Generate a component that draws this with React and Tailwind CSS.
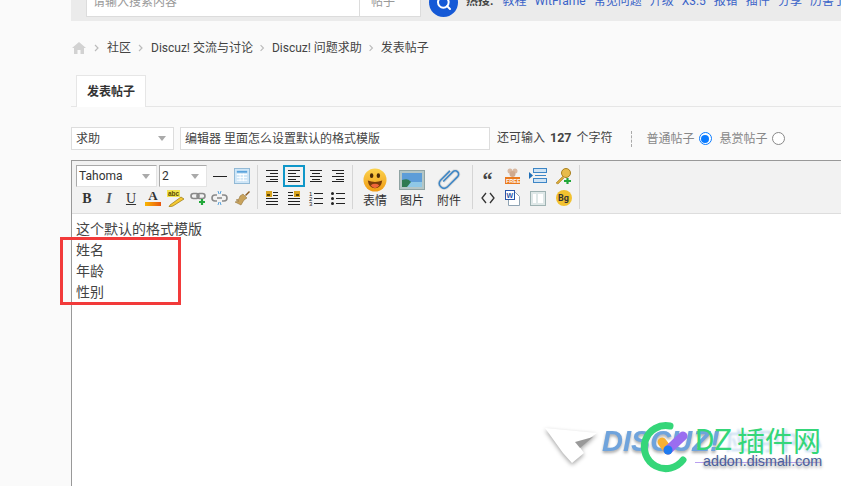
import { Search } from 'lucide-react'

const hotLinks = ['教程', 'WitFrame', '常见问题', '升级', 'X3.5', '报错', '插件', '分享', '历害了']
const crumbs = ['社区', 'Discuz! 交流与讨论', 'Discuz! 问题求助', '发表帖子']

function TopBar() {
  return (
    <div className="h-[21px] overflow-hidden bg-[#ebebeb] flex items-end pl-[15px]">
      <div className="shrink-0 flex items-center w-[335px] h-[30px] mb-[4px] bg-white border border-[#dcdcdc] text-[12px] text-[#999]">
        <span className="flex-1 pl-[6px]">请输入搜索内容</span>
        <span className="w-[61px] h-full border-l border-[#dcdcdc] pl-[11px] leading-[28px]">帖子</span>
      </div>
      <div className="shrink-0 w-[29px] h-[29px] mb-[4px] ml-[8px] rounded-full bg-[#1559d6] flex items-center justify-center">
        <Search className="w-[16px] h-[16px] text-white" strokeWidth={3} />
      </div>
      <div className="shrink-0 flex items-center gap-[8px] ml-[8px] h-[24px] mb-[8px] text-[12px] whitespace-nowrap">
        <span className="font-bold text-[#444] mr-[1px]">热搜:</span>
        {hotLinks.map((t) => (
          <span key={t} className="text-[#3a63c8]">{t}</span>
        ))}
      </div>
    </div>
  )
}

function Breadcrumb() {
  return (
    <div className="flex items-center h-[18px] mt-[18px] pl-[1px] text-[12px] text-[#444]">
      <svg width="14" height="12" viewBox="0 0 14 12" className="shrink-0">
        <path d="M7 0L0 6h2v6h3.500V8h3v4H12V6h2z" fill="#d2d2d2" />
      </svg>
      {crumbs.map((c, i) => (
        <span key={c} className="flex items-center">
          <svg width={i >= 2 ? 19 : 20} height="10" viewBox="0 0 20 10" className={i === 0 ? 'ml-[1px]' : ''}>
            <path d="M8 2l3 3-3 3" fill="none" stroke="#bbb" strokeWidth="1.2" />
          </svg>
          <span className="whitespace-nowrap">{c}</span>
        </span>
      ))}
    </div>
  )
}

function Select({ label, className }) {
  return (
    <div className={`flex items-center justify-between bg-white border ${className}`}>
      <span>{label}</span>
      <span className="w-0 h-0 border-x-[4px] border-x-transparent border-t-[5px] border-t-[#aaa]" />
    </div>
  )
}

function Radio({ checked }) {
  return (
    <span className={`block w-[13px] h-[13px] rounded-full bg-white flex items-center justify-center border ${checked ? 'border-[#0a7bff]' : 'border-[#888]'}`}>
      {checked && <span className="w-[8px] h-[8px] rounded-full bg-[#0a7bff]" />}
    </span>
  )
}

function AlignIcon({ widths, pic }) {
  return (
    <svg width="16" height="16" viewBox="0 0 16 16">
      {widths.map(([x1, x2, y]) => (
        <line key={y} x1={x1} x2={x2} y1={y + 0.5} y2={y + 0.5} stroke="#222" strokeWidth="1" />
      ))}
      {pic === 'left' && <rect x="2" y="1" width="6" height="6" fill="#d9a520" />}
      {pic === 'left' && <rect x="3" y="4" width="3" height="2" fill="#5a4308" />}
      {pic === 'right' && <rect x="8" y="1" width="6" height="6" fill="#d9a520" />}
      {pic === 'right' && <rect x="10" y="4" width="3" height="2" fill="#5a4308" />}
    </svg>
  )
}

const alignLeft = [[2, 14, 2], [2, 10, 5], [2, 14, 8], [2, 10, 11], [2, 14, 13]]
const alignCenter = [[2, 14, 2], [4, 12, 5], [2, 14, 8], [4, 12, 11], [2, 14, 13]]
const alignRight = [[2, 14, 2], [6, 14, 5], [2, 14, 8], [6, 14, 11], [2, 14, 13]]
const picLeft = [[9, 14, 2], [9, 14, 5], [2, 14, 8], [2, 14, 11], [2, 14, 14]]
const picRight = [[2, 7, 2], [2, 7, 5], [2, 14, 8], [2, 14, 11], [2, 14, 14]]

function Sep() {
  return <div className="w-px h-[44px] bg-[#d5d5d5] shrink-0" />
}

function IconCell({ className = '', children }) {
  return <div className={`flex items-center justify-center h-[22px] ${className}`}>{children}</div>
}

function FormatGroup() {
  return (
    <div className="w-[185px] shrink-0 pl-[4px]">
      <div className="flex items-center h-[22px]">
        <Select label="Tahoma" className="w-[81px] h-[22px] pl-[2px] pr-[6px] text-[12px] text-[#333] border-[#aaa] border-r-[#e4e4e4] border-b-[#e4e4e4]" />
        <Select label="2" className="w-[48px] h-[22px] ml-[2px] pl-[2px] pr-[7px] text-[12px] text-[#333] border-[#aaa] border-r-[#e4e4e4] border-b-[#e4e4e4]" />
        <div className="w-[14px] h-px bg-[#222] ml-[6px]" />
        <svg width="16" height="16" viewBox="0 0 17 17" className="ml-[7px]">
          <rect x="0.5" y="0.5" width="16" height="16" fill="#cfe6f7" stroke="#8fb7d4" />
          <rect x="3" y="3" width="11" height="2" fill="#5aa3dc" />
          <path d="M3 7h11M3 10h11M3 13h11M6.500 6v8M10 6v8" stroke="#fff" strokeWidth="1" />
        </svg>
      </div>
      <div className="flex items-center h-[22px] text-[#333]">
        <IconCell className="w-[22px] font-bold font-['Liberation_Serif',serif] text-[14px]">B</IconCell>
        <IconCell className="w-[22px] italic font-['Liberation_Serif',serif] text-[14px] font-bold text-[#555]">I</IconCell>
        <IconCell className="w-[22px] underline font-['Liberation_Serif',serif] text-[14px]">U</IconCell>
        <IconCell className="w-[22px] flex-col">
          <span className="font-['Liberation_Serif',serif] font-bold text-[13px] leading-[12px]">A</span>
          <span className="w-[16px] h-[4px] bg-gradient-to-r from-[#f7b500] to-[#e8540f]" />
        </IconCell>
        <IconCell className="w-[24px]">
          <svg width="18" height="17" viewBox="0 0 18 17">
            <rect x="0" y="0" width="13" height="7" fill="#f0e24a" />
            <text x="1" y="6" fontSize="6.500" fontWeight="bold" fill="#5a4a00" fontFamily="Liberation Sans">abc</text>
            <path d="M3 15l11-8 3 2-11 7-4 1z" fill="#f5c933" stroke="#97760f" strokeWidth="0.7" />
          </svg>
        </IconCell>
        <IconCell className="w-[20px]">
          <svg width="17" height="16" viewBox="0 0 17 16">
            <rect x="1" y="3.500" width="8" height="5" rx="2.500" fill="none" stroke="#8a8a8a" strokeWidth="1.6" />
            <rect x="7" y="3.500" width="8" height="5" rx="2.500" fill="none" stroke="#8a8a8a" strokeWidth="1.6" />
            <path d="M9 12h6M12 9v6" stroke="#22a83a" strokeWidth="2.200" />
          </svg>
        </IconCell>
        <IconCell className="w-[22px]">
          <svg width="17" height="16" viewBox="0 0 17 16">
            <path d="M6 5H4a3 3 0 000 6h2M11 5h2a3 3 0 010 6h-2M6 8h5" fill="none" stroke="#8a8a8a" strokeWidth="1.600" />
            <path d="M7 1l1 3M10 1L9 4M7 15l1-3M10 15l-1-3" stroke="#5aa3dc" strokeWidth="1" />
          </svg>
        </IconCell>
        <IconCell className="w-[24px]">
          <svg width="17" height="16" viewBox="0 0 17 16">
            <path d="M11 5l4-4 1 1-4 4z" fill="#8a5a20" />
            <path d="M9 4l4 4-3 2-3 5-6-3 4-1-3-1 3-1 1-3z" fill="#c9a35c" stroke="#8a6a30" strokeWidth="0.5" />
          </svg>
        </IconCell>
      </div>
    </div>
  )
}

function AlignGroup() {
  return (
    <div className="w-[94px] shrink-0 pl-[3px]">
      <div className="flex items-center h-[22px]">
        <IconCell className="w-[22px]"><AlignIcon widths={alignRight} /></IconCell>
        <IconCell className="w-[22px] border-2 border-[#0f97c9]"><AlignIcon widths={alignLeft} /></IconCell>
        <IconCell className="w-[22px]"><AlignIcon widths={alignCenter} /></IconCell>
        <IconCell className="w-[22px]"><AlignIcon widths={alignRight} /></IconCell>
      </div>
      <div className="flex items-center h-[22px]">
        <IconCell className="w-[22px]"><AlignIcon widths={picLeft} pic="left" /></IconCell>
        <IconCell className="w-[22px]"><AlignIcon widths={picRight} pic="right" /></IconCell>
        <IconCell className="w-[22px]">
          <svg width="16" height="16" viewBox="0 0 16 16">
            <text x="1" y="5.500" fontSize="6" fill="#222" fontFamily="Liberation Sans">1</text>
            <text x="1" y="10.500" fontSize="6" fill="#222" fontFamily="Liberation Sans">2</text>
            <text x="1" y="15.500" fontSize="6" fill="#222" fontFamily="Liberation Sans">3</text>
            <path d="M6 3.500h9M6 8.500h9M6 13.500h9" stroke="#222" />
          </svg>
        </IconCell>
        <IconCell className="w-[22px]">
          <svg width="16" height="16" viewBox="0 0 16 16">
            <circle cx="2.500" cy="3.500" r="1.500" fill="#222" />
            <circle cx="2.500" cy="8.500" r="1.500" fill="#222" />
            <circle cx="2.500" cy="13.500" r="1.500" fill="#222" />
            <path d="M6 3.500h9M6 8.500h9M6 13.500h9" stroke="#222" />
          </svg>
        </IconCell>
      </div>
    </div>
  )
}

function MediaGroup() {
  return (
    <div className="w-[119px] shrink-0 pl-[10px] pt-[3px] flex gap-[13px] text-[12px] text-[#333]">
      <div className="flex flex-col items-center w-[24px]">
        <svg width="24" height="24" viewBox="0 0 25 25">
          <defs>
            <linearGradient id="smile" x1="0" x2="0" y1="0" y2="1">
              <stop offset="0" stopColor="#fbd34f" />
              <stop offset="1" stopColor="#f09a12" />
            </linearGradient>
          </defs>
          <circle cx="12.500" cy="12.500" r="12" fill="url(#smile)" />
          <ellipse cx="9" cy="8" rx="1.800" ry="2.500" fill="#4a2a08" />
          <ellipse cx="16" cy="8" rx="1.800" ry="2.500" fill="#4a2a08" />
          <path d="M5 13q7.500 3 15 0q-1 8-7.500 8T5 13z" fill="#7b3d0a" />
          <path d="M8 18q4.500-3 9 0q-2 3-4.500 3T8 18z" fill="#f0663a" />
        </svg>
        <span className="leading-[18px] whitespace-nowrap">表情</span>
      </div>
      <div className="flex flex-col items-center w-[24px]">
        <svg width="26" height="24" viewBox="0 0 26 24" className="shrink-0">
          <rect x="0.500" y="2.500" width="25" height="19" fill="#b4c6c6" stroke="#8fa3a3" />
          <rect x="3" y="5" width="20" height="14" fill="#5d9dd8" />
          <path d="M3 12q6-2 8 1t12 1v5H3z" fill="#2f7a52" />
          <path d="M12 14l11 0v5H8z" fill="#8fc8e6" />
        </svg>
        <span className="leading-[18px] whitespace-nowrap">图片</span>
      </div>
      <div className="flex flex-col items-center w-[24px]">
        <svg width="24" height="24" viewBox="0 0 24 25">
          <path d="M6 14L16 4a3.500 3.500 0 015 5L10 20a5 5 0 01-7-7L13 3" fill="none" stroke="#d8d8d8" strokeWidth="3.500" />
          <path d="M6 14L16 4a3.500 3.500 0 015 5L10 20a5 5 0 01-7-7L13 3" fill="none" stroke="#3d86c6" strokeWidth="1.600" />
        </svg>
        <span className="leading-[18px] whitespace-nowrap">附件</span>
      </div>
    </div>
  )
}

function ExtraGroup() {
  return (
    <div className="w-[106px] shrink-0 pl-[2px] grid grid-cols-[25px_25px_26px_25px] grid-rows-[22px_22px] items-center justify-items-center">
      <span className="font-['Liberation_Serif',serif] font-bold text-[20px] leading-[20px] h-[12px] text-[#444]">“</span>
      <svg width="15" height="16" viewBox="0 0 15 16">
        <circle cx="5" cy="3" r="2.500" fill="#d9b8a0" />
        <circle cx="10" cy="3" r="2.500" fill="#d9b8a0" />
        <circle cx="7.500" cy="6" r="3" fill="#cfa98e" />
        <rect x="0" y="9" width="15" height="7" fill="#ea7a1e" />
        <text x="1" y="15" fontSize="5.500" fontWeight="bold" fill="#fff" fontFamily="Liberation Sans">FREE</text>
      </svg>
      <svg width="18" height="16" viewBox="0 0 18 16">
        <rect x="4.500" y="0.500" width="13" height="4" fill="#cfe3f4" stroke="#3d86c6" />
        <rect x="4.500" y="10.500" width="13" height="4" fill="#cfe3f4" stroke="#3d86c6" />
        <path d="M6 7.500h11" stroke="#3d86c6" />
        <path d="M0 4l4 3.500L0 11z" fill="#1f6fb8" />
      </svg>
      <svg width="17" height="17" viewBox="0 0 17 17">
        <circle cx="11" cy="5" r="4.500" fill="#e8bb4a" stroke="#a98020" />
        <path d="M8 8L1 15l2 1 6-6" fill="#d8a838" stroke="#a98020" strokeWidth="0.600" />
        <path d="M9 13h7M12.500 10v6" stroke="#22a83a" strokeWidth="2.200" />
      </svg>
      <svg width="14" height="12" viewBox="0 0 14 12">
        <path d="M5 1L1 6l4 5M9 1l4 5-4 5" fill="none" stroke="#333" strokeWidth="1.300" />
      </svg>
      <svg width="15" height="16" viewBox="0 0 15 16">
        <path d="M3.500 2.500h7l4 4v9h-11z" fill="#fff" stroke="#8fa3b3" />
        <rect x="0.500" y="0.500" width="9" height="9" fill="#fff" stroke="#2a55a8" />
        <text x="1.500" y="7.500" fontSize="7" fontWeight="bold" fill="#2a55a8" fontFamily="Liberation Sans">W</text>
      </svg>
      <svg width="16" height="15" viewBox="0 0 16 15">
        <rect x="0.500" y="0.500" width="15" height="14" fill="#dfe8e8" stroke="#9fb3b3" />
        <rect x="3" y="3" width="3" height="9" fill="#fff" />
        <rect x="8" y="3" width="5" height="9" fill="#fff" />
      </svg>
      <span className="w-[16px] h-[16px] rounded-full bg-[#f2c230] text-[9px] font-bold text-[#333] flex items-center justify-center leading-none">Bg</span>
    </div>
  )
}

function Toolbar() {
  return (
    <div className="h-[53px] bg-[#f2f2f2] border-b border-[#ddd] flex items-start pt-[4px]">
      <FormatGroup />
      <Sep />
      <AlignGroup />
      <Sep />
      <MediaGroup />
      <Sep />
      <ExtraGroup />
      <Sep />
    </div>
  )
}

function Watermark() {
  return (
    <div className="absolute left-[540px] top-[418px] w-[301px] h-[68px] font-['Liberation_Sans',sans-serif]">
      <svg width="60" height="44" viewBox="0 0 60 44" className="absolute left-[3px] top-[8px] drop-shadow-[0_2px_2px_rgba(0,0,0,0.35)]">
        <path d="M2 2L54 7L36 20L41 27L29 37L20 27Z" fill="#fff" />
        <path d="M32 16L50 11L37 22Z" fill="#999" />
      </svg>
      <span className="absolute left-[186px] top-[7px] text-[24px] leading-[30px] text-[#bcd5ee] whitespace-nowrap blur-[1px] font-['Noto_Sans_CJK_SC',sans-serif]">应用中心</span>
      <span className="absolute left-[62px] top-[5px] text-[29px] leading-[36px] font-bold italic text-[#6fa3dc] whitespace-nowrap blur-[0.5px] [text-shadow:0_2px_3px_#a9a9a9]">DISCUZ!</span>
      <div className="absolute left-[155px] top-[44px] w-[125px] h-px bg-[#b9a0f0]" />
      <svg width="54" height="54" viewBox="0 0 54 54" className="absolute left-[100px] top-[2px]">
        <path d="M30 6A21.500 21.500 0 1 0 43 40" fill="none" stroke="#35d679" strokeWidth="7" strokeLinecap="round" />
        <path d="M22 22l6 8" stroke="#f6b034" strokeWidth="9" strokeLinecap="round" />
        <path d="M28 30l15-14" stroke="#9a6df0" strokeWidth="9" strokeLinecap="round" />
        <circle cx="28" cy="30" r="4.500" fill="#1e7bf0" />
      </svg>
      <span className="absolute left-[155px] top-[4px] text-[30px] leading-[36px] text-[#35d679] whitespace-nowrap font-['Roboto',sans-serif]">DZ</span>
      <span className="absolute left-[197px] top-[5px] text-[28px] leading-[34px] text-[#35d679] whitespace-nowrap font-['Noto_Sans_CJK_SC',sans-serif]">插件网</span>
      <span className="absolute left-[163px] top-[33px] text-[14.300px] leading-[20px] text-[#4a5f9a] whitespace-nowrap [text-shadow:0_2px_3px_#9a9a9a]">addon.dismall.com</span>
    </div>
  )
}

export default function App() {
  return (
    <div className="relative w-[841px] h-[486px] overflow-hidden bg-[#fafafa] pl-[71px] font-['Roboto','Noto_Sans_CJK_SC',sans-serif]">
      <TopBar />
      <Breadcrumb />
      <div className="mt-[18px] h-[32px] border-b border-[#e6e6e6] pl-[5px]">
        <div className="w-[70px] h-[32px] bg-white border border-[#e6e6e6] border-b-0 flex items-center justify-center text-[12px] font-bold text-[#333]">
          发表帖子
        </div>
      </div>
      <div className="flex items-center h-[23px] mt-[20px] text-[12px] text-[#444] whitespace-nowrap">
        <Select label="求助" className="w-[103px] h-[23px] pl-[4px] pr-[7px] border-[#ddd]" />
        <div className="w-[310px] h-[23px] ml-[6px] bg-white border border-[#ddd] pl-[4px] flex items-center">
          编辑器 里面怎么设置默认的格式模版
        </div>
        <span className="ml-[7px]">还可输入<b className="font-bold mx-[5px] text-[12.500px]">127</b>个字符</span>
        <div className="h-[16px] ml-[18px] border-l border-dashed border-[#aaa]" />
        <span className="ml-[15px] text-[#888]">普通帖子</span>
        <span className="ml-[4px]"><Radio checked /></span>
        <span className="ml-[8px] text-[#888]">悬赏帖子</span>
        <span className="ml-[4px]"><Radio /></span>
      </div>
      <div className="mt-[10px] border-t border-l border-[#999] h-[340px] bg-white">
        <Toolbar />
        <div className="pl-[4px] pt-[5px] text-[14px] leading-[21px] text-[#444]">
          <p>这个默认的格式模版</p>
          <p>姓名</p>
          <p>年龄</p>
          <p>性别</p>
        </div>
      </div>
      <div className="absolute left-[60px] top-[237px] w-[121px] h-[68px] border-[3px] border-[#f23a3a]" />
      <Watermark />
    </div>
  )
}
